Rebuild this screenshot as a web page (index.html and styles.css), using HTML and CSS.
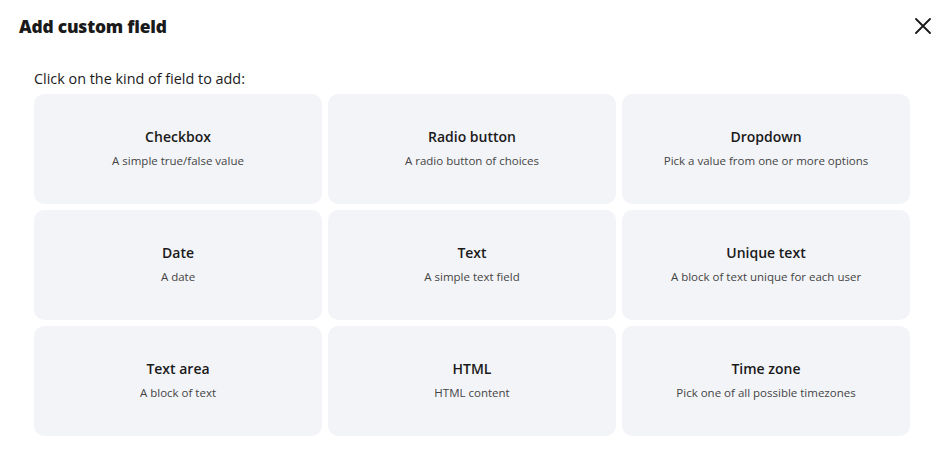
FILE: index.html
```html
<!DOCTYPE html>
<html>
<head>
<meta charset="utf-8">
<link rel="stylesheet" href="styles.css">
</head>
<body>
<div class="modal">
  <header class="header">
    <h1 class="title">Add custom field</h1>
    <button class="close" aria-label="Close">
      <svg width="16" height="16" viewBox="0 0 16 16"><path d="M1 1L15 15M15 1L1 15" stroke="#1a1a1a" stroke-width="1.8" stroke-linecap="round"/></svg>
    </button>
  </header>
  <section class="body">
    <p class="hint">Click on the kind of field to add:</p>
    <div class="grid">
      <div class="card"><div class="card-title">Checkbox</div><div class="card-desc">A simple true/false value</div></div>
      <div class="card"><div class="card-title">Radio button</div><div class="card-desc">A radio button of choices</div></div>
      <div class="card"><div class="card-title">Dropdown</div><div class="card-desc">Pick a value from one or more options</div></div>
      <div class="card"><div class="card-title">Date</div><div class="card-desc">A date</div></div>
      <div class="card"><div class="card-title">Text</div><div class="card-desc">A simple text field</div></div>
      <div class="card"><div class="card-title">Unique text</div><div class="card-desc">A block of text unique for each user</div></div>
      <div class="card"><div class="card-title">Text area</div><div class="card-desc">A block of text</div></div>
      <div class="card"><div class="card-title">HTML</div><div class="card-desc">HTML content</div></div>
      <div class="card"><div class="card-title">Time zone</div><div class="card-desc">Pick one of all possible timezones</div></div>
    </div>
  </section>
</div>
</body>
</html>
```
FILE: styles.css
```css
* { box-sizing: border-box; }
html, body { margin: 0; padding: 0; background: #fff; }
body { font-family: "Open Sans", "Liberation Sans", sans-serif; color: #1a1a1a; }
.modal { width: 950px; height: 474px; }
.header { display: flex; justify-content: space-between; align-items: center; padding: 13px 19px 0 19px; height: 39px; }
.title { margin: 0; font-size: 17.4px; font-weight: 800; letter-spacing: -0.2px; line-height: 24px; }
.close { background: none; border: 0; padding: 0; width: 16px; height: 16px; display: flex; }
.body { padding: 30px 40px 0 34px; }
.hint { margin: 0 0 5px 0; font-size: 14.4px; line-height: 20px; color: #1a1a1a; }
.grid { display: grid; grid-template-columns: repeat(3, 288px); grid-auto-rows: 110px; gap: 6px; }
.card { background: #f3f4f8; border-radius: 10px; display: flex; flex-direction: column; justify-content: center; align-items: center; text-align: center; padding-bottom: 2px; }
.card-title { font-size: 14px; font-weight: 600; line-height: 20px; color: #1a1a1a; }
.card-desc { font-size: 11.5px; line-height: 16px; color: #444; margin-top: 6px; }
```
